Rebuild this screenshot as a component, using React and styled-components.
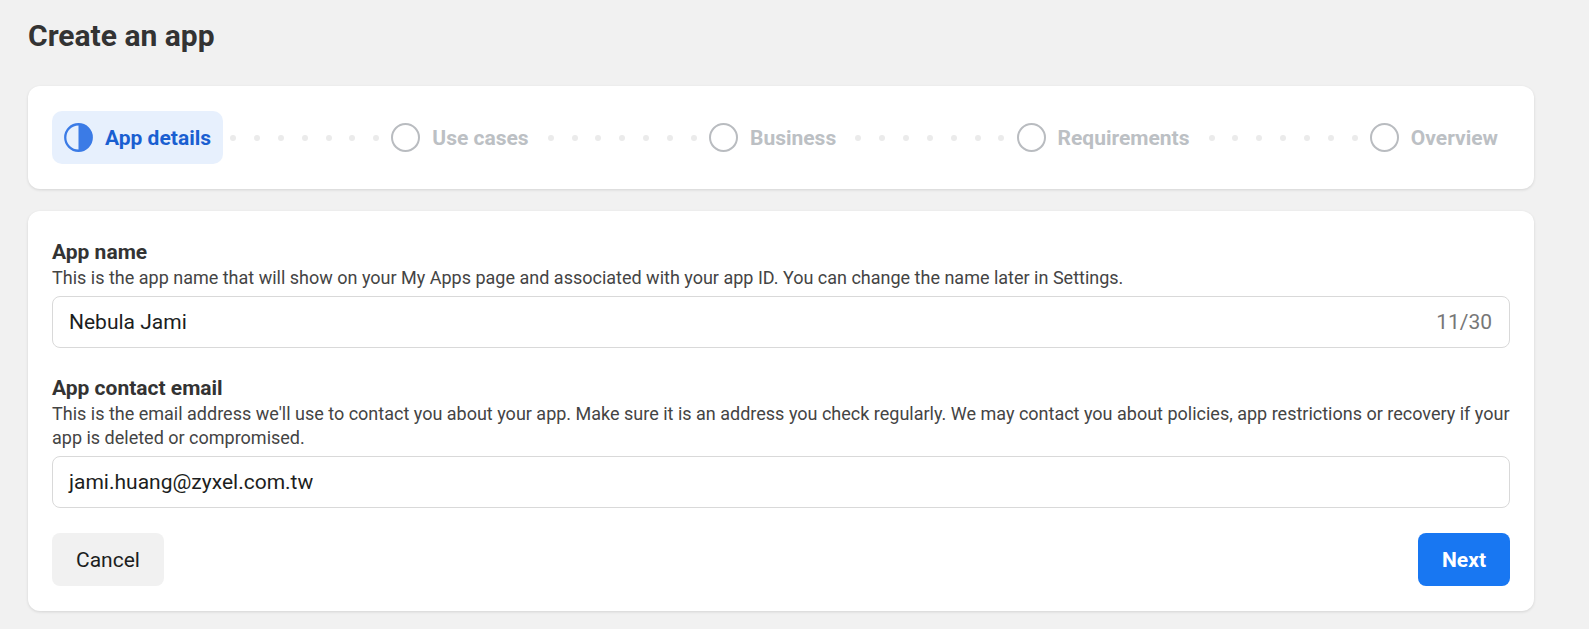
import React from 'react';
import styled, { createGlobalStyle } from 'styled-components';

const GlobalStyle = createGlobalStyle`
	* {
		box-sizing: border-box;
	}
	body {
		margin: 0;
		background: #f1f1f1;
		font-family: Roboto, 'Liberation Sans', Arial, sans-serif;
		color: #333;
	}
`;

const Page = styled.main`
	padding: 18px 55px 24px 28px;
`;

const Title = styled.h1`
	margin: 0 0 32px;
	font-size: 30px;
	line-height: 36px;
	font-weight: 700;
	color: #333;
`;

const Card = styled.section`
	background: #fff;
	border-radius: 12px;
	box-shadow: 0 1px 3px rgba(0, 0, 0, 0.12);
	padding: ${(p) => p.$pad || '24px'};
	& + & {
		margin-top: 22px;
	}
`;

/*     STEPPER     */

const Stepper = styled.ol`
	display: flex;
	align-items: center;
	margin: 0;
	padding: 0;
	list-style: none;
`;

const Step = styled.li`
	display: flex;
	align-items: center;
	gap: 12px;
	height: 53px;
	padding: 0 12px;
	border-radius: 10px;
	background: ${(p) => (p.$active ? '#e7f0fd' : 'transparent')};
	color: ${(p) => (p.$active ? '#1a5fd1' : '#bcc0c4')};
	font-size: 21px;
	font-weight: 700;
	white-space: nowrap;
`;

const Ring = styled.span`
	width: 29px;
	height: 29px;
	border-radius: 50%;
	border: 2.5px solid #b9bcc0;
	flex-shrink: 0;
`;

const Connector = styled.div`
	flex: 1;
	display: flex;
	align-items: center;
	justify-content: space-between;
	padding: 0 0 0 7px;
`;

const Dot = styled.span`
	width: 6px;
	height: 6px;
	border-radius: 50%;
	background: #ebebeb;
`;

function HalfIcon() {
	return (
		<svg width='29' height='29' viewBox='0 0 28 28'>
			<circle cx='14' cy='14' r='12.8' fill='none' stroke='#3b7be6' strokeWidth='2.2' />
			<path d='M14 1.2 A12.8 12.8 0 0 1 14 26.8 Z' fill='#3b7be6' />
		</svg>
	);
}

const steps = ['App details', 'Use cases', 'Business', 'Requirements', 'Overview'];

/*     FORM     */

const Field = styled.div`
	& + & {
		margin-top: 27px;
	}
`;

const Label = styled.label`
	display: block;
	margin-top: 4px;
	font-size: 21px;
	line-height: 26px;
	font-weight: 700;
	color: #333;
`;

const Help = styled.p`
	margin: 1px 0 7px;
	font-size: 18px;
	line-height: ${(p) => p.$lh || '23px'};
	color: #444;
`;

const InputBox = styled.div`
	display: flex;
	align-items: center;
	height: 52px;
	padding: 0 17px 0 16px;
	border: 1px solid #d9d9d9;
	border-radius: 8px;
	font-size: 21px;
	color: #1c1e21;
	span {
		flex: 1;
	}
	small {
		font-size: 21px;
		color: #777;
	}
`;

const Actions = styled.div`
	display: flex;
	justify-content: space-between;
	margin-top: 25px;
`;

const Button = styled.button`
	height: 53px;
	padding: 0 24px;
	border: none;
	border-radius: 8px;
	font-family: inherit;
	font-size: 21px;
	font-weight: ${(p) => (p.$primary ? 700 : 400)};
	background: ${(p) => (p.$primary ? '#1877f2' : '#f1f1f1')};
	color: ${(p) => (p.$primary ? '#fff' : '#1c1e21')};
	cursor: pointer;
`;

export default function App() {
	return (
		<Page>
			<GlobalStyle />
			<Title>Create an app</Title>

			<Card $pad='25px 24px'>
				<Stepper>
					{steps.map((s, i) => (
						<React.Fragment key={s}>
							{i > 0 && (
								<Connector>
									{Array.from({ length: 7 }).map((_, d) => (
										<Dot key={d} />
									))}
								</Connector>
							)}
							<Step $active={i === 0}>
								{i === 0 ? <HalfIcon /> : <Ring />}
								{s}
							</Step>
						</React.Fragment>
					))}
				</Stepper>
			</Card>

			<Card $pad='24px 24px 25px'>
				<Field>
					<Label>App name</Label>
					<Help>
						This is the app name that will show on your My Apps page and associated with your app ID. You
						can change the name later in Settings.
					</Help>
					<InputBox>
						<span>Nebula Jami</span>
						<small>11/30</small>
					</InputBox>
				</Field>
				<Field>
					<Label>App contact email</Label>
					<Help $lh='23.5px'>
						This is the email address we'll use to contact you about your app. Make sure it is an address
						you check regularly. We may contact you about policies, app restrictions or recovery if your
						app is deleted or compromised.
					</Help>
					<InputBox>
						<span>jami.huang@zyxel.com.tw</span>
					</InputBox>
				</Field>
				<Actions>
					<Button>Cancel</Button>
					<Button $primary>Next</Button>
				</Actions>
			</Card>
		</Page>
	);
}
